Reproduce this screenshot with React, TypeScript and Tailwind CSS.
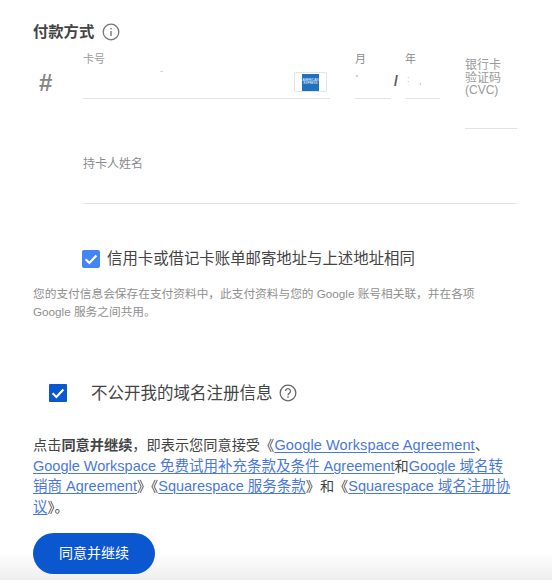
import React from "react";

const font = { fontFamily: '"Liberation Sans", "Noto Sans CJK SC", sans-serif' };

function Link({ children }: { children: React.ReactNode }) {
  return <a className="text-[#4a78dc] underline underline-offset-[2px] decoration-[1px] text-[14.5px]">{children}</a>;
}

function Check({ className, size }: { className: string; size: number }) {
  return (
    <span className={className}>
      <svg width={size} height={size} viewBox="0 0 18 18" fill="none">
        <path d="M3.6 9.2 7.4 13l7-7.6" stroke="#fff" strokeWidth="2.2" />
      </svg>
    </span>
  );
}

export default function App() {
  return (
    <div style={font} className="relative w-[552px] h-[588px] bg-white overflow-hidden text-[#3c4043]">
      <div className="absolute left-0 right-0 top-[552px] h-[28px] bg-gradient-to-b from-white to-[#eeeeee]" />
      <div className="relative">
        <div className="flex items-center h-[20px] mt-[22px] ml-[33px]">
          <span className="text-[15.3px] font-bold leading-[20px] text-[#444]">付款方式</span>
          <svg className="ml-[8px]" width="18" height="18" viewBox="0 0 18 18" fill="none">
            <circle cx="9" cy="9" r="7.8" stroke="#777" strokeWidth="1.3" />
            <path d="M9 8v5M9 5v1.6" stroke="#777" strokeWidth="1.4" />
          </svg>
        </div>

        <div className="flex items-start mt-[10px] ml-[39px] h-[77px]">
          <div className="w-[44px] pt-[17px] text-[24px] leading-[28px] font-bold text-[#858585]">#</div>
          <div className="relative w-[247px] h-[47px] border-b border-[#e3e3e3]">
            <div className="text-[11px] leading-[14px] text-[#9a9a9a]">卡号</div>
            <span className="absolute left-[77px] top-[14px] text-[9px] leading-[10px] text-[#bbb]">-</span>
            <div className="flex justify-end mt-[6px] pr-[3px]">
              <div className="w-[33px] h-[20px] rounded-[2px] border border-[#e4e4e4] flex items-center justify-center">
                <div className="w-[17px] h-[17px] bg-[#1f72bd] flex items-center justify-center text-white text-[3px] leading-[3px] text-center">AMERICAN<br />EXPRESS</div>
              </div>
            </div>
          </div>
          <div className="relative ml-[25px] w-[36px] h-[47px] border-b border-[#e3e3e3]">
            <div className="text-[11px] leading-[14px] text-[#8c8c8c]">月</div>
            <span className="absolute left-[1px] top-[21px] text-[9px] leading-[10px] text-[#888]">'</span>
          </div>
          <div className="ml-[14px] w-[35px] h-[47px] border-b border-[#e3e3e3] relative">
            <div className="text-[11px] leading-[14px] text-[#8c8c8c]">年</div>
            <span className="absolute left-[-11px] top-[21px] text-[14px] leading-[16px] font-bold text-[#555]">/</span>
            <span className="absolute left-[2px] top-[22px] text-[9px] leading-[10px] text-[#bbb]">:</span>
            <span className="absolute left-[14px] top-[24px] text-[9px] leading-[10px] text-[#aaa]">,</span>
          </div>
          <div className="ml-[25px] w-[52px] h-[78px] mt-[-2px] pt-[8px] border-b border-[#e3e3e3] text-[12px] leading-[12.5px] text-[#9a9a9a] relative top-[1px]">
            银行卡<br />验证码<br />(CVC)
          </div>
        </div>

        <div className="ml-[83px] w-[434px] h-[49px] mt-[26px] pt-[1px] border-b border-[#e3e3e3] text-[12px] leading-[16px] text-[#8a8a8a]">
          持卡人姓名
        </div>

        <div className="flex items-center ml-[82px] mt-[45px] h-[20px]">
          <Check size={18} className="flex items-center justify-center w-[18px] h-[18px] rounded-[2px] bg-[#4285f4]" />
          <span className="ml-[7px] text-[15.4px] leading-[20px] text-[#444]">信用卡或借记卡账单邮寄地址与上述地址相同</span>
        </div>

        <p className="ml-[33px] w-[445px] mt-[16px] text-[11.7px] leading-[18px] text-[#8f8f8f]">
          您的支付信息会保存在支付资料中，此支付资料与您的 Google 账号相关联，并在各项 Google 服务之间共用。
        </p>

        <div className="flex items-center ml-[49px] mt-[62px] h-[20px]">
          <Check size={18} className="flex items-center justify-center w-[18px] h-[18px] rounded-[1px] bg-[#0b57d0]" />
          <span className="ml-[24px] text-[16.5px] leading-[20px] text-[#444]">不公开我的域名注册信息</span>
          <svg className="ml-[6px]" width="18" height="18" viewBox="0 0 17 17" fill="none">
            <circle cx="8.5" cy="8.5" r="7.4" stroke="#666" strokeWidth="1.2" />
            <path d="M6.2 6.7a2.3 2.3 0 1 1 3.6 1.9c-.8.5-1.3 1-1.3 2" stroke="#666" strokeWidth="1.2" />
            <path d="M8.5 11.6v1.5" stroke="#666" strokeWidth="1.3" />
          </svg>
        </div>

        <p className="ml-[33px] w-[482px] mt-[32px] text-[14.2px] leading-[20.7px] text-[#444]">
          点击<b>同意并继续</b>，即表示您同意接受<span className="tracking-[0.2px]">《</span><span className="tracking-[0.12px]"><Link>Google Workspace Agreement</Link></span>、<Link>Google Workspace 免费试用补充条款及条件 Agreement</Link>和<Link>Google 域名转销商 Agreement</Link>》《<Link>Squarespace 服务条款</Link>》和《<Link>Squarespace 域名注册协议</Link>》。
        </p>

        <button className="block ml-[33px] mt-[15px] w-[122px] h-[41px] rounded-full bg-[#0b57d0] text-white text-[14px] font-normal">
          同意并继续
        </button>
      </div>
    </div>
  );
}
